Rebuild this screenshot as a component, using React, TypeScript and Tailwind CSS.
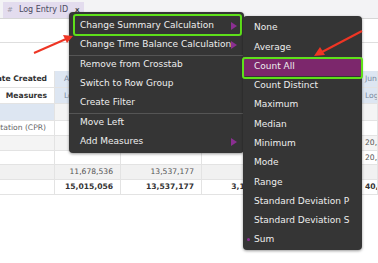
import React from "react";

const font = { fontFamily: '"DejaVu Sans", Verdana, sans-serif' };

const cols = [55, 66, 81, 80, 80, 16];

type Cell = { t?: string; cls?: string; bg?: string; align?: "l" | "r" };

function Row({ h, cells, bg }: { h: number; cells: Cell[]; bg?: string }) {
  return (
    <div className="flex border-b border-[#e3e3e3]" style={{ height: h, background: bg }}>
      {cols.map((w, i) => {
        const c = cells[i] || {};
        return (
          <div
            key={i}
            className={
              "flex items-center overflow-hidden whitespace-nowrap border-r border-[#e3e3e3] " +
              (c.align === "l" ? "justify-start pl-[3px] " : "justify-end pr-[7px] ") +
              (c.cls || "")
            }
            style={{ width: w, background: c.bg }}
          >
            {c.t}
          </div>
        );
      })}
    </div>
  );
}

const LB = "#dde6f2";

function Tri({ className = "" }: { className?: string }) {
  return (
    <svg width="6" height="8" viewBox="0 0 6 8" className={className}>
      <path d="M0 0 L6 4 L0 8 Z" fill="#8b2f91" />
    </svg>
  );
}

export default function App() {
  const main = [
    "Change Summary Calculation",
    "Change Time Balance Calculation",
    "Remove from Crosstab",
    "Switch to Row Group",
    "Create Filter",
    "Move Left",
    "Add Measures",
  ];
  const sub = [
    "None",
    "Average",
    "Count All",
    "Count Distinct",
    "Maximum",
    "Median",
    "Minimum",
    "Mode",
    "Range",
    "Standard Deviation P",
    "Standard Deviation S",
    "Sum",
  ];
  return (
    <div className="relative w-[378px] h-[263px] overflow-hidden bg-white" style={font}>
      {/* top bar */}
      <div className="h-[19px] bg-[#f3f3f5] border-b border-[#d6d6d6] flex items-start pl-[3px] pt-[2px]">
        <div className="h-[16px] w-[81px] bg-[#e3dcee] flex items-center text-[8px] text-[#4a4a60]">
          <span className="ml-[4px] text-[7px] text-[#9a98a8]">#</span>
          <span className="ml-[6px]">Log Entry ID</span>
          <span className="ml-[7px] text-[7px] font-bold text-[#444]">x</span>
        </div>
      </div>
      <div className="h-[24px] border-b border-[#dedede]" />
      <div className="h-[28px]" />
      {/* table */}
      <div className="text-[7.6px] text-[#555]">
        <Row
          h={17}
          cells={[
            { t: "Date Created", cls: "font-bold text-[#333]" },
            { t: "April", bg: LB, align: "l", cls: "pl-[9px] text-[#7a8aa0]" },
            { bg: LB },
            { bg: LB },
            { bg: LB },
            { t: "June", bg: LB, align: "l", cls: "text-[#7a8aa0]" },
          ]}
        />
        <Row
          h={16}
          cells={[
            { t: "Measures", cls: "font-bold text-[#333]" },
            { t: "Log Entry ID", bg: LB, align: "l", cls: "pl-[9px] text-[#7a8aa0]" },
            { bg: LB },
            { bg: LB },
            { bg: LB },
            { t: "Log Entry", bg: LB, align: "l", cls: "text-[#7a8aa0]" },
          ]}
        />
        <Row h={17} bg="#f4f4f4" cells={[{ bg: LB }]} />
        <Row h={15} cells={[{ t: "Computer Presentation (CPR)", cls: "pr-[8px] text-[#666]" }]} />
        <Row h={15} bg="#f4f4f4" cells={[{}, {}, {}, {}, {}, { t: "20,", align: "l" }]} />
        <Row h={14} cells={[{}, {}, {}, {}, {}, { t: "20,", align: "l" }]} />
        <Row
          h={15}
          bg="#f1f1f1"
          cells={[{}, { t: "11,678,536" }, { t: "13,537,177" }, {}, {}, {}]}
        />
        <Row
          h={15}
          cells={[
            {},
            { t: "15,015,056", cls: "font-bold text-[#333]" },
            { t: "13,537,177", cls: "font-bold text-[#333]" },
            { t: "3,154,882", cls: "font-bold text-[#333]" },
            {},
            { t: "40,5", align: "l", cls: "pl-0 font-bold text-[#333]" },
          ]}
        />
      </div>

      {/* main context menu */}
      <div className="absolute left-[69px] top-[12px] w-[175px] h-[141px] bg-[#353535] rounded-[4px] pt-[4px] text-[9px] text-[#eeeeee] shadow-[0_1px_3px_rgba(0,0,0,0.4)]">
        {main.map((m, i) => (
          <div
            key={m}
            className={
              "relative h-[19.33px] flex items-center pl-[11px] " +
              (i === 2 || i === 5 ? "border-t border-[#555] " : "")
            }
          >
            {m}
            {(i === 0 || i === 1 || i === 6) && <Tri className="absolute right-[7px] top-[6px]" />}
          </div>
        ))}
        <div className="absolute left-[4px] top-[2px] w-[169px] h-[22px] border-2 border-[#5ee01a] rounded-[3px]" />
      </div>

      {/* submenu */}
      <div className="absolute left-[243px] top-[16px] w-[119px] h-[234px] bg-[#353535] rounded-[4px] pt-[2.5px] text-[9px] text-[#eeeeee] shadow-[0_1px_3px_rgba(0,0,0,0.4)]">
        {sub.map((s) => (
          <div
            key={s}
            className={
              "relative h-[19.27px] flex items-center pl-[11px] " +
              (s === "Count All" ? "bg-[#7c276c]" : "")
            }
          >
            {s === "Sum" && (
              <span className="absolute left-[4px] top-[8px] w-[3px] h-[3px] rounded-full bg-[#8b2f91]" />
            )}
            {s}
          </div>
        ))}
        <div className="absolute left-[-1px] top-[41px] w-[121px] h-[22px] border-2 border-[#5ee01a] rounded-[3px]" />
      </div>

      {/* red arrows */}
      <svg className="absolute left-0 top-0 pointer-events-none" width="378" height="263">
        <line x1="34" y1="53" x2="66" y2="39" stroke="#ee3524" strokeWidth="2" />
        <path d="M73 36 L63 35 L67 43 Z" fill="#ee3524" />
        <line x1="362" y1="31" x2="322" y2="52" stroke="#ee3524" strokeWidth="2" />
        <path d="M314 56 L320 47 L325 55 Z" fill="#ee3524" />
      </svg>
    </div>
  );
}
